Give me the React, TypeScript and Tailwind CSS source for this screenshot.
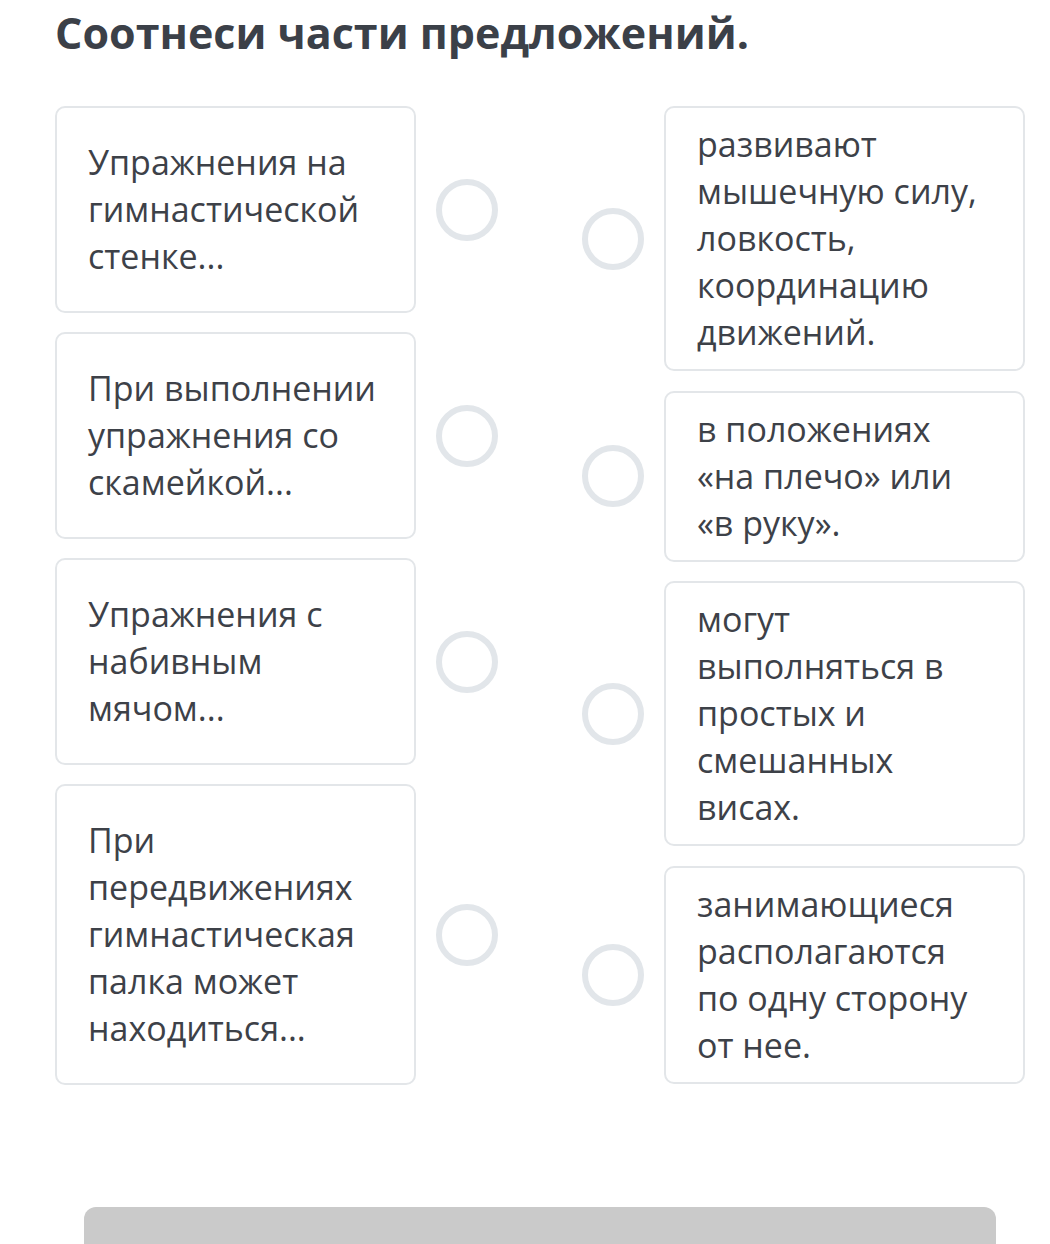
import React from 'react';

const left = [
  'Упражнения на гимнастической стенке...',
  'При выполнении упражнения со скамейкой...',
  'Упражнения с набивным мячом...',
  'При передвижениях гимнастическая палка может находиться...',
];

const right = [
  'развивают мышечную силу, ловкость, координацию движений.',
  'в положениях «на плечо» или «в руку».',
  'могут выполняться в простых и смешанных висах.',
  'занимающиеся располагаются по одну сторону от нее.',
];

const Dot = () => (
  <div className="w-[62px] h-[62px] shrink-0 rounded-full border-[6px] border-[#e2e6ea] bg-white" />
);

export default function App() {
  return (
    <div className="min-h-[1244px] bg-white text-[#3d4148]" style={{ fontFamily: '"Open Sans", "Noto Sans", sans-serif' }}>
      <div className="px-[55px]">
        <h1 className="pt-[5px] text-[43px] leading-[56px] font-bold text-[#3b4048]">Соотнеси части предложений.</h1>

        <div className="mt-[45px] flex gap-[84px]">
          {/* left parts */}
          <div className="w-[443px] flex flex-col gap-[19px]">
            {left.map((t) => (
              <div key={t} className="flex items-center gap-[20px]">
                <div className="w-[361px] rounded-[10px] border-2 border-[#e3e6e9] px-[31px] py-[31px] text-[34px] leading-[47px]">
                  {t}
                </div>
                <Dot />
              </div>
            ))}
          </div>

          {/* right parts */}
          <div className="w-[443px] flex flex-col gap-[19.5px]">
            {right.map((t) => (
              <div key={t} className="flex items-center gap-[20px]">
                <Dot />
                <div className="w-[361px] rounded-[10px] border-2 border-[#e3e6e9] px-[31px] py-[13px] text-[34px] leading-[47px]">
                  {t}
                </div>
              </div>
            ))}
          </div>
        </div>
      </div>

      <div className="ml-[84px] mr-[54px] mt-[122px] h-[80px] rounded-t-[12px] bg-[#cacaca]" />
    </div>
  );
}
